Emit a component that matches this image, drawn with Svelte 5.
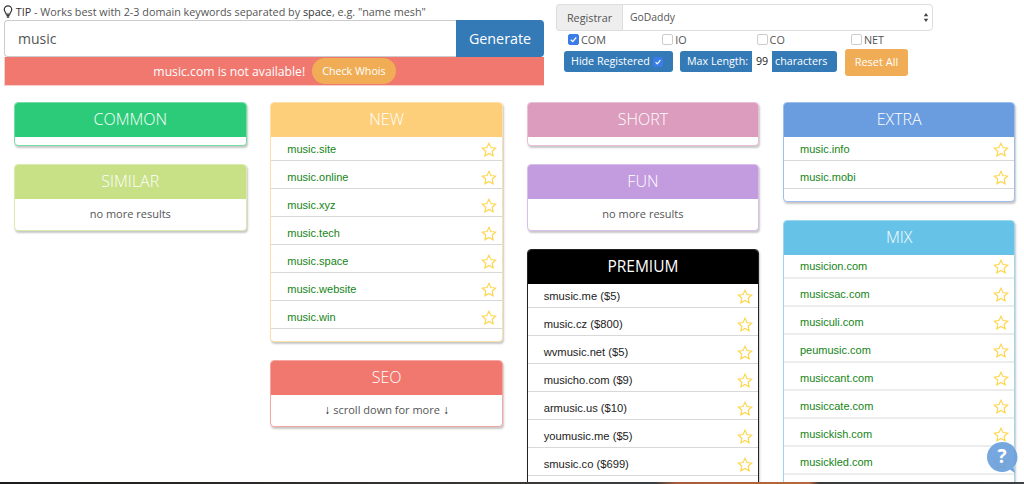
<script>
  const star = "M10 1.6l2.5 5.4 5.9.7-4.4 4 1.2 5.8L10 14.6l-5.2 2.9L6 11.7l-4.4-4 5.9-.7z";
  const columns = [
    [
      { title: 'COMMON', color: '#2ccb79', rows: [], foot: 8 },
      { title: 'SIMILAR', color: '#c8e086', note: 'no more results' }
    ],
    [
      { title: 'NEW', color: '#fdcf7a', foot: 11.5, rows: ['music.site','music.online','music.xyz','music.tech','music.space','music.website','music.win'] },
      { title: 'SEO', color: '#f1786f', note: 'scroll down for more', arrows: true }
    ],
    [
      { title: 'SHORT', color: '#dc9cbd', rows: [], foot: 8 },
      { title: 'FUN', color: '#c39bdf', note: 'no more results' },
      { title: 'PREMIUM', color: '#000000', dark: true, foot: 12, rows: ['smusic.me ($5)','music.cz ($800)','wvmusic.net ($5)','musicho.com ($9)','armusic.us ($10)','youmusic.me ($5)','smusic.co ($699)'] }
    ],
    [
      { title: 'EXTRA', color: '#6a9de0', foot: 11.5, rows: ['music.info','music.mobi'] },
      { title: 'MIX', color: '#66c2e6', light: true, foot: 12, rows: ['musicion.com','musicsac.com','musiculi.com','peumusic.com','musiccant.com','musiccate.com','musickish.com','musickled.com'] }
    ]
  ];
  const tlds = [['COM', true], ['IO', false], ['CO', false], ['NET', false]];
</script>

<div class="page">
  <header class="top">
    <div class="search">
      <div class="tip">
        <svg class="bulb" viewBox="0 0 12 16" width="10" height="13"><path d="M6 1a4.600 4.600 0 0 0-4.600 4.600c0 2.300 1.900 3.300 2.300 5.600h4.600c.4-2.300 2.300-3.300 2.300-5.600A4.600 4.600 0 0 0 6 1z" fill="none" stroke="#333" stroke-width="1.5"/><path d="M4 13h4M4.600 15h2.800" stroke="#333" stroke-width="1.4" fill="none"/></svg>
        <span class="dark">TIP</span> - Works best with 2-3 domain keywords separated by <span class="dark">space</span>, e.g. "name mesh"
      </div>
      <div class="inputline">
        <div class="input">music</div>
        <div class="generate">Generate</div>
      </div>
      <div class="alert">
        <span>music.com is not available!</span>
        <span class="whois">Check Whois</span>
      </div>
    </div>
    <div class="controls">
      <div class="registrar">
        <div class="addon">Registrar</div>
        <div class="select">GoDaddy
          <svg viewBox="0 0 8 14" width="6" height="11"><path d="M4 1l3 4.400H1zM4 13l3-4.400H1z" fill="#444"/></svg>
        </div>
      </div>
      <div class="tlds">
        {#each tlds as [name, on]}
          <div class="tld">
            <span class="check" class:on>{#if on}<svg viewBox="0 0 10 10" width="9" height="9"><path d="M2 5.200l2.100 2.100L8 2.800" fill="none" stroke="#fff" stroke-width="1.4"/></svg>{/if}</span>{name}
          </div>
        {/each}
      </div>
      <div class="actions">
        <div class="blue hide">Hide Registered <span class="check on small"><svg viewBox="0 0 10 10" width="8" height="8"><path d="M2 5.200l2.100 2.100L8 2.800" fill="none" stroke="#fff" stroke-width="1.4"/></svg></span></div>
        <div class="blue maxlen">Max Length:<span class="num">99</span>characters</div>
        <div class="reset">Reset All</div>
      </div>
    </div>
  </header>

  <main class="grid">
    {#each columns as col}
      <div class="col">
        {#each col as p}
          <section class="panel" class:dark={p.dark} style="--c:{p.color}">
            <h2>{p.title}</h2>
            {#if p.note}
              <div class="note">{#if p.arrows}<b>↓</b>{/if}{p.note}{#if p.arrows}<b>↓</b>{/if}</div>
            {:else}
              <ul style="padding-bottom:{p.foot}px">
                {#each p.rows as r}
                  <li class:black={p.dark} class:light={p.light}>
                    <span>{r}</span>
                    <svg viewBox="0 0 20 19" width="16" height="15"><path d={star} fill="none" stroke="#fdd74f" stroke-width="1.5"/></svg>
                  </li>
                {/each}
              </ul>
            {/if}
          </section>
        {/each}
      </div>
    {/each}
  </main>

  <div class="help">
    <svg viewBox="0 0 32 32" width="32" height="32"><path d="M15 0a15 15 0 1 0 8 27.700l5 3.300-1.500-6A15 15 0 0 0 15 0z" fill="#6a9fdc" fill-opacity="0.92"/></svg>
    <span>?</span>
  </div>
  <div class="strip"></div>
</div>

<style>
  :global(body) { margin: 0; background: #fff; }
  .page {
    position: relative; width: 1024px; height: 484px; overflow: hidden;
    font-family: "Open Sans", sans-serif; color: #555; font-size: 12px;
  }
  .top { display: flex; height: 102px; box-sizing: border-box; padding-left: 4px; }
  .search { width: 540px; }
  .tip { height: 20px; font-size: 10.8px; line-height: 24px; white-space: nowrap; margin-left: -1px; }
  .tip .dark { color: #333; }
  .bulb { vertical-align: -2px; }
  .inputline { display: flex; height: 37px; }
  .input {
    flex: 1; box-sizing: border-box; border: 1px solid #ccc; border-right: 0; border-radius: 4px 0 0 4px;
    padding-left: 13px; font-size: 14px; line-height: 35px; color: #555;
  }
  .generate {
    width: 88px; background: #337ab7; color: #fff; font-size: 14.3px; line-height: 37px; text-align: center;
    border-radius: 0 4px 4px 0;
  }
  .alert {
    height: 29px; background: #f1786f; color: #fff; font-size: 12.2px;
    display: flex; justify-content: center; align-items: center; gap: 7px; border: 1px solid #f5d0cc; border-width: 0 0 1px 1px; box-sizing: border-box;
  }
  .whois { background: #f0ad55; border-radius: 14px; font-size: 10.7px; padding: 5px 10px; line-height: 16px; }
  .controls { margin-left: 12px; width: 377px; }
  .registrar { display: flex; height: 27px; margin-top: 4px; }
  .addon {
    width: 66px; box-sizing: border-box; background: #eee; border: 1px solid #ddd; border-right: 0; border-radius: 4px 0 0 4px;
    font-size: 10.8px; line-height: 25px; text-align: center; color: #555;
  }
  .select {
    flex: 1; border: 1px solid #ddd; border-radius: 0 4px 4px 0; font-size: 10.4px; line-height: 25px; padding: 0 3px 0 7px;
    display: flex; justify-content: space-between; align-items: center;
  }
  .tlds { display: flex; padding-left: 12px; height: 15px; margin-top: 1px; line-height: 15px; font-size: 10.8px; }
  .tld { flex: none; width: 94.3px; display: flex; align-items: center; gap: 2px; }
  .check {
    display: inline-flex; width: 9px; height: 9px; box-sizing: content-box; border: 1px solid #ccc; border-radius: 2px; background: #fff;
    align-items: center; justify-content: center;
  }
  .check.on { background: #3b7de8; border-color: #3b7de8; }
  .check.small { width: 8px; height: 8px; vertical-align: -1px; margin-left: 0; }
  .actions { display: flex; align-items: flex-start; margin-top: 2px; padding-left: 8px; }
  .blue { background: #337ab7; color: #fff; border-radius: 3px; height: 21px; line-height: 21px; font-size: 10.7px; box-sizing: border-box; }
  .hide { width: 109px; padding-left: 7px; white-space: nowrap; margin-top: 2px; }
  .maxlen { width: 157px; margin: 2px 0 0 7px; padding-left: 7px; display: flex; white-space: nowrap; }
  .num { width: 20px; background: #fff; color: #222; text-align: center; margin: 0 3px 0 4px; }
  .reset {
    margin-left: 8px; width: 63px; height: 27px; background: #f0ad55; color: #fff; border-radius: 3px; font-size: 11px; line-height: 26px; text-align: center;
  }
  .grid { display: grid; grid-template-columns: repeat(4, 232.5px); column-gap: 23.83px; padding-left: 14px; }
  .col { display: flex; flex-direction: column; gap: 18px; }
  .panel {
    border: 1px solid color-mix(in srgb, var(--c) 65%, white); border-radius: 4px; background: #fff;
    box-shadow: 1px 2px 2px rgba(0,0,0,.22); overflow: hidden;
  }
  .panel.dark { border-color: #222; }
  h2 {
    margin: -1px -1px 0; background: var(--c); color: #fff; font-weight: 300; font-size: 16px; line-height: 35px; text-align: center; height: 35px;
  }
  .dark h2 { font-weight: 400; font-size: 15.5px; }
  .note { height: 31px; line-height: 30px; text-align: center; font-size: 11px; color: #555; }
  .note b { color: #222; font-weight: 700; font-size: 12px; margin: 0 3px; }
  ul { margin: 0; padding: 0; list-style: none; }
  li {
    height: 28px; box-sizing: border-box; border-bottom: 1px solid #d8d8d8; display: flex; justify-content: space-between; align-items: center;
    padding: 5px 5px 0 16px; font-family: "Liberation Sans", sans-serif; font-size: 11px; color: #158515;
  }
  li:first-child { height: 24px; padding-top: 1px; }
  li.black { color: #222; font-size: 11.2px; }
  li.light { border-bottom: 2px solid #ececec; }
  .help { position: absolute; left: 987px; top: 442px; width: 32px; height: 32px; }
  .help svg { position: absolute; inset: 0; }
  .help span { position: absolute; left: 0; width: 30px; top: 0; text-align: center; color: #fff; font: bold 19px/29px "Open Sans", sans-serif; }
  .strip {
    position: absolute; left: 0; right: 0; bottom: 0; height: 2px;
    background: linear-gradient(to right, #1c1c1c 0, #3a3833 50%, #3a3f44 64%, #a85c3a 66%, #b8673f 79%, #3a3a3a 80%, #3c4348 100%);
  }
</style>
